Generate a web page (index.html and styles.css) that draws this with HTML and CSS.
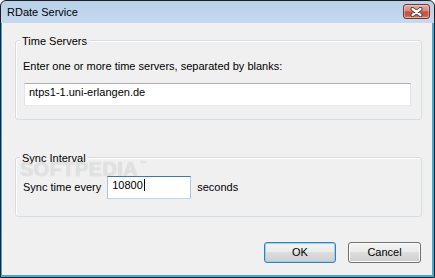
FILE: index.html
```html
<!DOCTYPE html>
<html>
	<head>
		<meta charset="utf-8" />
		<title>RDate Service</title>
		<link rel="stylesheet" href="styles.css">
	</head>

	<body>
		<div class="window">
			<div class="titlebar">
				<span class="title">RDate Service</span>
				<span class="close">
					<svg width="13" height="10" viewBox="0 0 13 10">
						<path d="M2.5 2 L10.5 8 M10.5 2 L2.5 8" stroke="#3b3b3b" stroke-width="4" stroke-linecap="round" fill="none" />
						<path d="M2.5 2 L10.5 8 M10.5 2 L2.5 8" stroke="#ffffff" stroke-width="2.2" stroke-linecap="round" fill="none" />
					</svg>
				</span>
			</div>
			<div class="client">
				<div class="group servers">
					<div class="group-title">Time Servers</div>
					<div class="label">Enter one or more time servers, separated by blanks:</div>
					<div class="textbox wide">ntps1-1.uni-erlangen.de</div>
				</div>
				<div class="group interval">
					<div class="group-title">Sync Interval</div>
					<div class="row">
						<span>Sync time every</span>
						<div class="textbox short focused">10800<span class="caret"></span></div>
						<span>seconds</span>
					</div>
				</div>
				<div class="buttons">
					<button class="btn default">OK</button>
					<button class="btn">Cancel</button>
				</div>
			</div>
			<div class="watermark">SOFTPEDIA<span class="tm">™</span></div>
		</div>
	</body>
</html>
```

FILE: styles.css
```css
* {
	padding: 0px;
	margin: 0px;
	box-sizing: border-box;
}
body {
	font: 11px/15px "Liberation Sans", Arial, sans-serif;
	color: #000;
	background: #fff;
}
.window {
	position: relative;
	width: 435px;
	height: 278px;
	display: flex;
	flex-direction: column;
	border: 1px solid #1e1e1e;
	border-radius: 6px 6px 0 0;
	background: linear-gradient(#b8d0ea, #c6d9f0 22px);
	overflow: hidden;
}
.titlebar {
	height: 22px;
	display: flex;
	align-items: flex-start;
	padding: 4px 4px 0 6px;
}
.title {
	color: #000;
}
.close {
	margin-left: auto;
	margin-top: -1px;
	width: 27px;
	height: 15px;
	display: flex;
	align-items: center;
	justify-content: center;
	border: 1px solid #6a3a33;
	border-radius: 3px;
	background: linear-gradient(#e9aa9c, #d8887a 45%, #c45240 52%, #c75b45 80%, #da8b72);
	box-shadow: inset 0 0 0 1px rgba(255, 255, 255, 0.35);
}
.client {
	flex: 1;
	display: flex;
	flex-direction: column;
	background: #f0f0f0;
	border-left: 1px solid #38aee0;
	border-right: 2px solid #38aee0;
	border-bottom: 2px solid #38aee0;
	padding: 17px 10px 0 13px;
}
.group {
	border: 1px solid #d5dfe5;
	border-radius: 3px;
	padding: 0 10px 13px 7px;
	box-shadow: inset 1px 1px 0 #fff;
}
.group.interval {
	margin-top: 37px;
	padding-bottom: 17px;
}
.group-title {
	display: table;
	margin: -7px 0 0 -3px;
	padding: 0 2px;
	background: #f0f0f0;
}
.label {
	margin-top: 10px;
}
.textbox {
	height: 23px;
	padding: 1px 4px 0;
	background: #fff;
	border: 1px solid;
	border-color: #abadb3 #e2e3ea #e3e9ef #e2e3ea;
	white-space: nowrap;
}
.textbox.wide {
	margin-top: 9px;
	margin-left: 1px;
}
.textbox.short {
	width: 84px;
}
.textbox.focused {
	border-color: #3d7bad #a4c9e3 #b7d9ed #a4c9e3;
}
.caret {
	display: inline-block;
	width: 1px;
	height: 12px;
	margin-left: 1px;
	vertical-align: -2px;
	background: #000;
}
.row {
	display: flex;
	align-items: center;
	gap: 6px;
	margin-top: 10px;
}
.buttons {
	display: flex;
	justify-content: flex-end;
	gap: 12px;
	margin-top: 25px;
	padding-right: 1px;
}
.btn {
	width: 72px;
	height: 21px;
	font: inherit;
	color: #000;
	border: 1px solid #707070;
	border-radius: 3px;
	background: linear-gradient(#f2f2f2, #ebebeb 50%, #dddddd 50%, #cfcfcf);
	box-shadow: inset 0 0 0 1px #fcfcfc;
}
.btn + .btn {
	width: 73px;
}
.btn.default {
	border-color: #3c7fb1;
	box-shadow: inset 0 0 0 1px #8ed4f6;
}
.watermark {
	position: absolute;
	left: 19px;
	top: 153px;
	font: bold 20px/20px "Liberation Sans", Arial, sans-serif;
	letter-spacing: 0.4px;
	color: rgba(255, 255, 255, 0.55);
	text-shadow: 0 0 1px rgba(0, 0, 0, 0.22);
	pointer-events: none;
}
.watermark .tm {
	font-size: 7px;
	vertical-align: 10px;
	margin-left: 2px;
}
```
